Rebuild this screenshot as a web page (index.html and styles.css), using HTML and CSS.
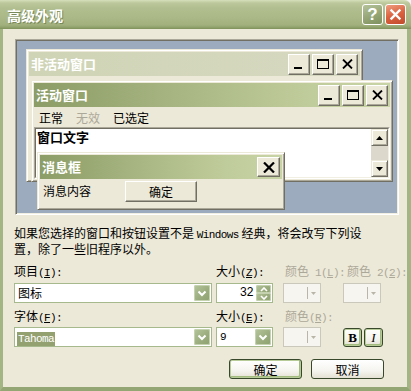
FILE: index.html
```html
<!DOCTYPE html>
<html lang="zh-CN">
<head>
<meta charset="utf-8">
<title>高级外观</title>
<link rel="stylesheet" href="styles.css">
</head>
<body>
<div class="window">
  <div class="titlebar">
    <span class="title">高级外观</span>
    <div class="tb-buttons">
      <span class="tb-btn help">?</span>
      <span class="tb-btn close"><svg width="13" height="13" viewBox="0 0 13 13"><path d="M2.5 2.5L10.5 10.5M10.5 2.5L2.5 10.5" stroke="#fff" stroke-width="2.4" stroke-linecap="square"/></svg></span>
    </div>
  </div>
  <div class="client">
    <div class="preview">
      <div class="desktop">
        <div class="pwin inactive">
          <div class="cap inact">
            <span class="cap-text">非活动窗口</span>
            <div class="cbtns">
              <span class="cbtn"><svg width="12" height="10" viewBox="0 0 12 10"><rect x="1" y="8" width="8" height="2"/></svg></span>
              <span class="cbtn"><svg width="12" height="10" viewBox="0 0 12 10"><rect x="0.5" y="0.5" width="11" height="9" fill="none" stroke="#000"/><rect x="0" y="0" width="12" height="2"/></svg></span>
              <span class="cbtn"><svg width="11" height="10" viewBox="0 0 11 10"><path d="M1 0.5L10 9.5M10 0.5L1 9.5" stroke="#000" stroke-width="1.8"/></svg></span>
            </div>
          </div>
        </div>
        <div class="pwin active">
          <div class="cap act">
            <span class="cap-text">活动窗口</span>
            <div class="cbtns">
              <span class="cbtn"><svg width="12" height="10" viewBox="0 0 12 10"><rect x="1" y="8" width="8" height="2"/></svg></span>
              <span class="cbtn"><svg width="12" height="10" viewBox="0 0 12 10"><rect x="0.5" y="0.5" width="11" height="9" fill="none" stroke="#000"/><rect x="0" y="0" width="12" height="2"/></svg></span>
              <span class="cbtn"><svg width="11" height="10" viewBox="0 0 11 10"><path d="M1 0.5L10 9.5M10 0.5L1 9.5" stroke="#000" stroke-width="1.8"/></svg></span>
            </div>
          </div>
          <div class="menu"><span>正常</span><span class="dis">无效</span><span>已选定</span></div>
          <div class="tarea">
            <div class="tarea-in">
              <div class="ttext">窗口文字</div>
              <div class="sbar">
                <span class="sb"><svg width="7" height="4" viewBox="0 0 7 4"><path d="M3.5 0L7 4H0z"/></svg></span>
                <span class="track"></span>
                <span class="sb"><svg width="7" height="4" viewBox="0 0 7 4"><path d="M0 0H7L3.5 4z"/></svg></span>
              </div>
            </div>
          </div>
        </div>
        <div class="pwin msg">
          <div class="cap act">
            <span class="cap-text">消息框</span>
            <div class="cbtns">
              <span class="cbtn"><svg width="12" height="11" viewBox="0 0 12 11"><path d="M1 0.5L11 10.5M11 0.5L1 10.5" stroke="#000" stroke-width="2.2"/></svg></span>
            </div>
          </div>
          <div class="mbody"><span class="mtext">消息内容</span><span class="pbtn">确定</span></div>
        </div>
      </div>
    </div>
    <p class="desc">如果您选择的窗口和按钮设置不是 <span class="m">Windows</span> 经典，将会改写下列设<br>置，除了一些旧程序以外。</p>
    <div class="form">
      <div class="lbl">项目<span class="m">(<u>I</u>):</span></div>
      <div class="lbl">大小<span class="m">(<u>Z</u>):</span></div>
      <div class="lbl dis pl2">颜色<span class="m"> 1(<u>L</u>):</span></div>
      <div class="lbl dis pl4">颜色<span class="m"> 2(<u>2</u>):</span></div>

      <div class="crow"><div class="combo w1"><span class="val">图标</span><span class="dropbtn"><svg width="10" height="7" viewBox="0 0 10 7"><path d="M1.5 1.5L5 5L8.5 1.5" fill="none" stroke="#fff" stroke-width="2"/></svg></span></div></div>
      <div class="crow"><div class="combo w2"><span class="val right m">32</span><span class="spin"><span class="sp"><svg width="8" height="5" viewBox="0 0 8 5"><path d="M1 4L4 1L7 4" fill="none" stroke="#fff" stroke-width="1.6"/></svg></span><span class="sp"><svg width="8" height="5" viewBox="0 0 8 5"><path d="M1 1L4 4L7 1" fill="none" stroke="#fff" stroke-width="1.6"/></svg></span></span></div></div>
      <div class="crow"><div class="dcombo"><span class="sep"></span><svg width="5" height="3" viewBox="0 0 5 3"><path d="M0 0H5L2.5 3z" fill="#B9B6A8"/></svg></div></div>
      <div class="crow"><div class="dcombo"><span class="sep"></span><svg width="5" height="3" viewBox="0 0 5 3"><path d="M0 0H5L2.5 3z" fill="#B9B6A8"/></svg></div></div>

      <div class="lbl r2">字体<span class="m">(<u>F</u>):</span></div>
      <div class="lbl r2">大小<span class="m">(<u>E</u>):</span></div>
      <div class="lbl r2 dis pl2">颜色<span class="m">(<u>R</u>):</span></div>
      <div class="lbl r2"></div>

      <div class="crow"><div class="combo w1"><span class="val sel-wrap"><span class="sel m">Tahoma</span></span><span class="dropbtn"><svg width="10" height="7" viewBox="0 0 10 7"><path d="M1.5 1.5L5 5L8.5 1.5" fill="none" stroke="#fff" stroke-width="2"/></svg></span></div></div>
      <div class="crow"><div class="combo w2"><span class="val m">9</span><span class="dropbtn"><svg width="10" height="7" viewBox="0 0 10 7"><path d="M1.5 1.5L5 5L8.5 1.5" fill="none" stroke="#fff" stroke-width="2"/></svg></span></div></div>
      <div class="crow"><div class="dcombo"><span class="sep"></span><svg width="5" height="3" viewBox="0 0 5 3"><path d="M0 0H5L2.5 3z" fill="#B9B6A8"/></svg></div></div>
      <div class="crow fbtns"><span class="fbtn bold">B</span><span class="fbtn ital">I</span></div>
    </div>
    <div class="actions">
      <span class="xbtn def">确定</span>
      <span class="xbtn">取消</span>
    </div>
  </div>
</div>
</body>
</html>
```
FILE: styles.css
```css
* { box-sizing: border-box; }
html, body { margin: 0; padding: 0; }
body {
  width: 411px; height: 391px; overflow: hidden; background: #f4f4f0;
  font-family: "Noto Sans CJK SC", "Noto Sans", sans-serif; font-size: 12px; color: #000;
}
.window {
  width: 411px; height: 391px; display: flex; flex-direction: column;
  background: #ECE9D8; border-radius: 0 7px 0 0; overflow: hidden;
}
.titlebar {
  flex: none; height: 29px; display: flex; align-items: center; padding: 0 5px 0 7px;
  background: linear-gradient(#D6DFBB 0, #BCC89B 3px, #B1BE8F 8px, #AAB887 18px, #A1B07C 25px, #93A46F 27px, #7F915B 29px);
}
.title {
  flex: 1; color: #fff; font-size: 14px; font-weight: bold; line-height: 16px;
  text-shadow: 1px 1px 0 #7A8A5A;
}
.tb-buttons { display: flex; gap: 2px; }
.tb-btn {
  width: 21px; height: 21px; border: 1px solid #fff; border-radius: 3px;
  display: flex; align-items: center; justify-content: center;
}
.help {
  background: linear-gradient(160deg, #B6C39B, #95A575 55%, #80915F);
  color: #fff; font: bold 17px/1 "Liberation Sans", sans-serif;
}
.close { background: linear-gradient(160deg, #EE9D80, #DA6240 50%, #C24B2C); }

.client {
  flex: 1; display: flex; flex-direction: column;
  border-left: 3px solid #A4B584; border-right: 4px solid #A4B584; border-bottom: 4px solid #93A673;
  padding: 10px 8px 0 11px;
}
.preview {
  flex: none; margin-left: 1px; width: 384px; height: 176px; padding: 1px;
  border: 1px solid; border-color: #ACA899 #fff #fff #ACA899;
  box-shadow: inset 1px 1px 0 #716F64, inset -1px -1px 0 #F1EFE2;
}
.desktop { position: relative; width: 380px; height: 172px; background: #9DABBE; }

.pwin {
  position: absolute; display: flex; flex-direction: column; background: #ECE9D8; padding: 2px;
  border: 1px solid; border-color: #ECE9D8 #716F64 #716F64 #ECE9D8;
  box-shadow: inset 1px 1px 0 #fff, inset -1px -1px 0 #ACA899;
}
.inactive { left: 9px; top: 8px; width: 337px; height: 133px; }
.active { left: 14px; top: 39px; width: 362px; height: 102px; }
.msg { left: 20px; top: 111px; width: 248px; height: 58px; }

.cap {
  flex: none; height: 24px; display: flex; align-items: center; padding: 0 2px 0 2px;
  color: #fff; font-size: 13px; font-weight: bold;
}
.cap-text { flex: 1; line-height: 16px; }
.cap.act { background: linear-gradient(90deg, #8D9D67, #A3B27E 35%, #BCC997 70%, #C9D4A6); }
.cap.inact { background: linear-gradient(90deg, #D0D4B6, #D6D9C0); }
.cbtns { display: flex; gap: 2px; }
.cbtn {
  width: 22px; height: 21px; background: #ECE9D8; display: flex; align-items: center; justify-content: center;
  border: 1px solid; border-color: #fff #716F64 #716F64 #fff; box-shadow: inset -1px -1px 0 #ACA899;
}
.msg .cbtn { width: 23px; height: 20px; }

.menu { flex: none; height: 20px; display: flex; align-items: center; gap: 13px; padding-left: 5px; line-height: 15px; }
.menu .dis { color: #ACA899; }

.tarea {
  flex: 1; display: flex; border: 1px solid; border-color: #ACA899 #fff #fff #ACA899;
}
.tarea-in {
  flex: 1; display: flex; border: 1px solid; border-color: #716F64 #F1EFE2 #F1EFE2 #716F64; background: #fff;
}
.ttext { flex: 1; font-size: 13px; font-weight: bold; line-height: 15px; padding-left: 1px; }
.sbar { width: 17px; display: flex; flex-direction: column; }
.sb {
  flex: none; height: 17px; background: #ECE9D8; display: flex; align-items: center; justify-content: center;
  border: 1px solid; border-color: #ECE9D8 #716F64 #716F64 #ECE9D8; box-shadow: inset 1px 1px 0 #fff, inset -1px -1px 0 #ACA899;
}
.track { flex: 1; background: #DCD9CC; }

.mbody { flex: 1; display: flex; align-items: flex-start; padding-left: 3px; }
.mtext { padding-top: 4px; line-height: 15px; }
.pbtn {
  margin: 2px 0 0 34px; width: 72px; height: 21px; display: flex; align-items: center; justify-content: center;
  border: 1px solid; border-color: #fff #716F64 #716F64 #fff; box-shadow: inset -1px -1px 0 #ACA899;
}

.desc { margin: 10px 0 0 0; height: 30px; line-height: 15px; white-space: nowrap; }
.m { font-family: "Liberation Mono", monospace; font-size: 11px; letter-spacing: -0.6px; line-height: 1; }

.form { display: grid; grid-template-columns: 202px 67px 60px 50px; margin-top: 8px; }
.lbl { height: 15px; line-height: 15px; margin-bottom: 5px; white-space: nowrap; }
.lbl.r2 { margin-bottom: 4px; }
.lbl.dis { color: #ACA899; }
.pl2 { padding-left: 2px; }
.pl4 { padding-left: 4px; }
.crow { height: 20px; margin-bottom: 5px; }

.combo {
  height: 20px; border: 1px solid #A5B98C; background: #fff; display: flex; align-items: center; padding: 1px;
}
.w1 { width: 198px; }
.w2 { width: 57px; }
.val { flex: 1; padding-left: 2px; line-height: 16px; white-space: nowrap; }
.val.right { text-align: right; padding-right: 3px; font-size: 12px; }
.sel-wrap { padding-left: 1px; }
.sel { background: #93A070; color: #fff; padding: 1px 1px; }
.dropbtn {
  width: 16px; height: 16px; border-radius: 2px; display: flex; align-items: center; justify-content: center;
  background: linear-gradient(135deg, #B6C59C, #9AAC7D 60%, #8CA06E); box-shadow: inset 0 0 0 1px #C5D2AF;
}
.spin { display: flex; flex-direction: column; gap: 0; width: 15px; height: 16px; }
.sp {
  flex: 1; border-radius: 2px; display: flex; align-items: center; justify-content: center;
  background: linear-gradient(135deg, #B6C59C, #9AAC7D 60%, #8CA06E); box-shadow: inset 0 0 0 1px #C5D2AF;
}
.dcombo {
  width: 38px; height: 20px; border: 1px solid #CAC8BB; background: #F6F5EF;
  display: flex; align-items: center; justify-content: flex-end; padding-right: 4px;
}
.dcombo .sep { width: 1px; height: 12px; background: #B9B6A8; margin-right: 3px; }

.fbtns { display: flex; gap: 2px; padding-top: 1px; }
.fbtn {
  width: 19px; height: 19px; border: 1px solid #37492A; border-radius: 3px; display: flex; align-items: center; justify-content: center;
  background: linear-gradient(#FFFFFF, #F4F3EE 60%, #E3E0D2);
  box-shadow: inset 0 0 0 1px #B6CB97, inset -1px -1px 0 1px #A2BB7F;
  font-family: "Liberation Serif", serif; font-size: 13px;
}
.fbtn.bold { font-weight: bold; }
.fbtn.ital { font-style: italic; }

.actions { display: flex; justify-content: flex-end; gap: 9px; margin-top: 7px; padding-right: 15px; }
.xbtn {
  width: 73px; height: 20px; border: 1px solid #37492A; border-radius: 3px;
  display: flex; align-items: center; justify-content: center; line-height: 15px;
  background: linear-gradient(#FFFFFF, #F5F4EF 60%, #E4E1D3);
}
.xbtn.def { box-shadow: inset 0 0 0 1px #B6CB97, inset -1px -1px 0 1px #A2BB7F; }
```
